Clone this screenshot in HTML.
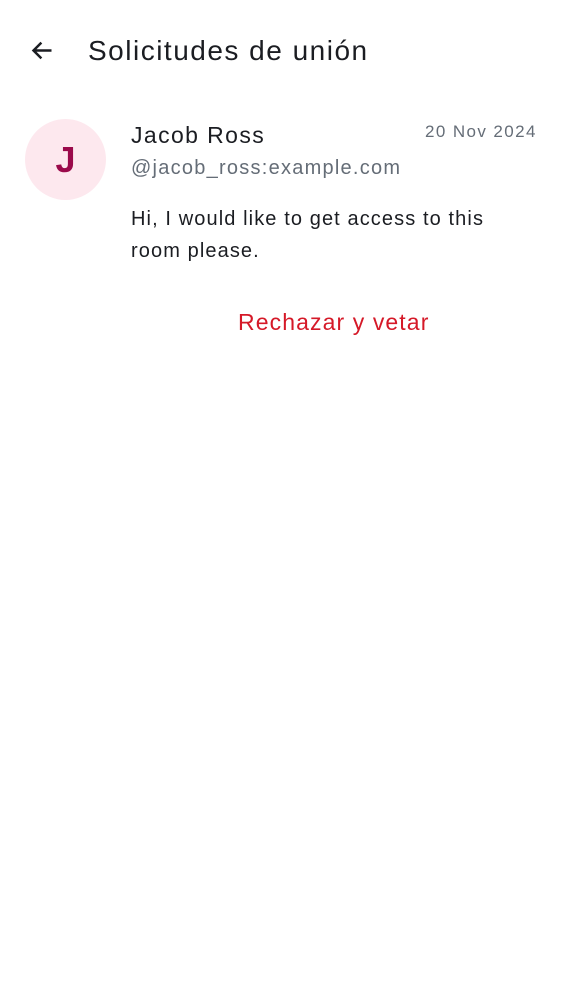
<!DOCTYPE html>
<html><head><meta charset="utf-8"><style>
body{margin:0;width:562px;height:1000px;background:#fff;font-family:"Liberation Sans",sans-serif;position:relative;overflow:hidden;color:#1b1d22}
.a{position:absolute;white-space:nowrap}
</style></head><body>
<svg class="a" style="left:29px;top:37px" width="27" height="27" viewBox="0 0 24 24"><path d="M20 12H5M11 5l-7 7 7 7" fill="none" stroke="#1b1d22" stroke-width="2.2"/></svg>
<div class="a" style="left:88px;top:35px;font-size:28px;letter-spacing:1.5px">Solicitudes de unión</div>
<div class="a" style="left:25px;top:119px;width:81px;height:81px;border-radius:50%;background:#fde8ee;color:#9b0a4b;font-size:36px;font-weight:bold;text-align:center;line-height:81px">J</div>
<div class="a" style="left:131px;top:122px;font-size:23px;letter-spacing:1.4px">Jacob Ross</div>
<div class="a" style="left:425px;top:122px;font-size:17px;color:#656d77;letter-spacing:1.4px">20 Nov 2024</div>
<div class="a" style="left:131px;top:157px;font-size:20px;color:#656d77;letter-spacing:1.25px">@jacob_ross:example.com</div>
<div class="a" style="left:131px;top:203px;font-size:20px;line-height:32px;letter-spacing:1.1px">Hi, I would like to get access to this<br>room please.</div>
<div class="a" style="left:238px;top:309px;font-size:23px;color:#d51928;letter-spacing:1.1px">Rechazar y vetar</div>
</body></html>
